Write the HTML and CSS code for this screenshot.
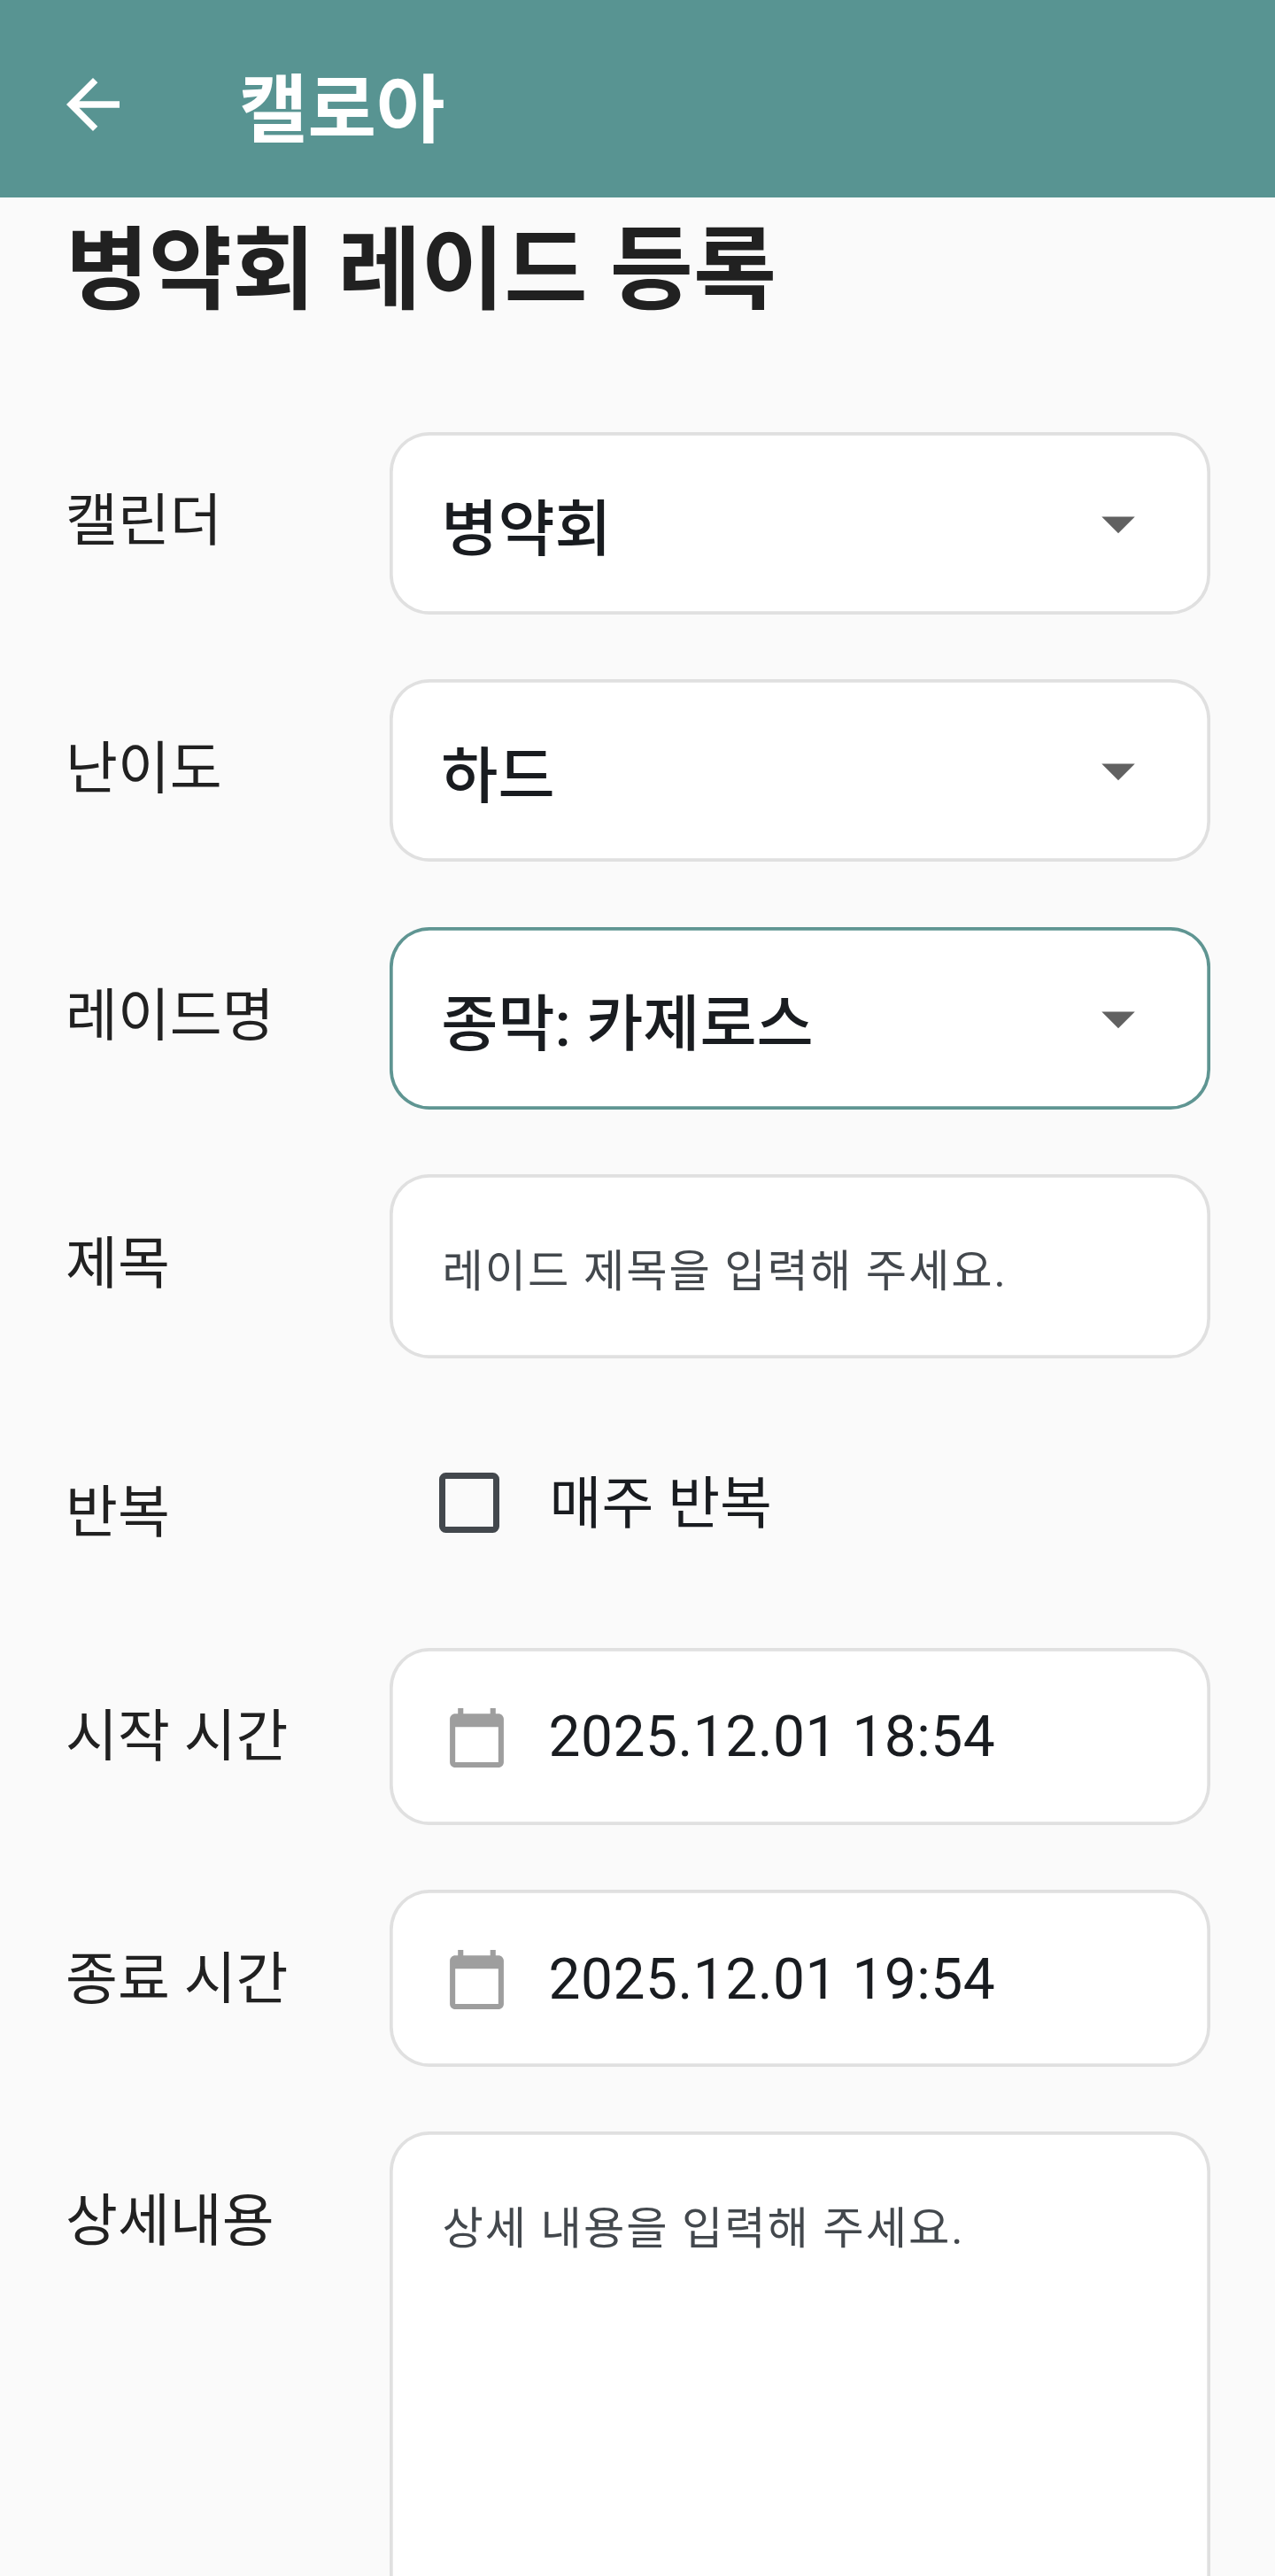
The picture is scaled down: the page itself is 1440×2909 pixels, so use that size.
FILE: index.html
```html
<!DOCTYPE html>
<html lang="ko">
<head>
<meta charset="utf-8">
<title>캘로아</title>
<link rel="stylesheet" href="styles.css">
</head>
<body>
<div class="screen">
  <header class="app-bar">
    <svg class="back" viewBox="0 0 24 24"><path d="M20 11H7.83l5.59-5.59L12 4l-8 8 8 8 1.41-1.41L7.83 13H20v-2z"/></svg>
    <div class="app-name">캘로아</div>
  </header>
  <main class="page">
    <h1 class="title">병약회 레이드 등록</h1>
    <div class="form">
      <div class="row">
        <div class="label">캘린더</div>
        <div class="field select"><span class="value">병약회</span><svg class="caret" viewBox="0 0 24 24"><path d="M7 10l5 5 5-5z"/></svg></div>
      </div>
      <div class="row">
        <div class="label">난이도</div>
        <div class="field select"><span class="value">하드</span><svg class="caret" viewBox="0 0 24 24"><path d="M7 10l5 5 5-5z"/></svg></div>
      </div>
      <div class="row">
        <div class="label">레이드명</div>
        <div class="field select active"><span class="value">종막: 카제로스</span><svg class="caret" viewBox="0 0 24 24"><path d="M7 10l5 5 5-5z"/></svg></div>
      </div>
      <div class="row">
        <div class="label">제목</div>
        <div class="field input"><span class="placeholder">레이드 제목을 입력해 주세요.</span></div>
      </div>
      <div class="row">
        <div class="label">반복</div>
        <div class="check"><span class="box"></span><span class="check-text">매주 반복</span></div>
      </div>
      <div class="row">
        <div class="label">시작 시간</div>
        <div class="field date"><svg class="calendar" viewBox="0 0 24 24"><path d="M20 3h-1V1h-2v2H7V1H5v2H4c-1.1 0-2 .9-2 2v16c0 1.1.9 2 2 2h16c1.1 0 2-.9 2-2V5c0-1.1-.9-2-2-2zm0 18H4V8h16v13z"/></svg><span class="time">2025.12.01 18:54</span></div>
      </div>
      <div class="row">
        <div class="label">종료 시간</div>
        <div class="field date"><svg class="calendar" viewBox="0 0 24 24"><path d="M20 3h-1V1h-2v2H7V1H5v2H4c-1.1 0-2 .9-2 2v16c0 1.1.9 2 2 2h16c1.1 0 2-.9 2-2V5c0-1.1-.9-2-2-2zm0 18H4V8h16v13z"/></svg><span class="time">2025.12.01 19:54</span></div>
      </div>
      <div class="row">
        <div class="label">상세내용</div>
        <div class="field textarea"><span class="placeholder">상세 내용을 입력해 주세요.</span></div>
      </div>
    </div>
  </main>
</div>
</body>
</html>
```
FILE: styles.css
```css
* {
  box-sizing: border-box;
}

body {
  margin: 0;
  background: #fafafa;
  color: #212121;
  font-family: Roboto, "Noto Sans CJK KR", sans-serif;
}

svg {
  display: block;
  flex: none;
}

.screen {
  width: 1440px;
  height: 2909px;
  overflow: hidden;
}

.app-bar {
  display: flex;
  align-items: flex-start;
  gap: 120px;
  height: 223px;
  padding: 73px 60px 0;
  background: #589492;
  color: #fff;
}

.back {
  width: 90px;
  height: 90px;
  fill: #fff;
}

.app-name {
  padding-top: 3px;
  font-size: 84.2px;
  font-weight: 700;
  line-height: 100px;
}

.page {
  padding: 22.5px 73.5px 0 74px;
}

.title {
  margin: 0 0 122.3px;
  font-size: 102.2px;
  font-weight: 700;
  line-height: 120px;
  white-space: nowrap;
}

.form {
  display: flex;
  flex-direction: column;
  gap: 73.5px;
}

.row {
  display: flex;
  align-items: flex-start;
}

.label {
  flex: none;
  width: 366px;
  padding-top: 61.5px;
  font-size: 64px;
  line-height: 80px;
  white-space: nowrap;
}

.field {
  flex: 1;
  display: flex;
  align-items: flex-start;
  height: 206px;
  padding-left: 59.5px;
  border-radius: 45px;
  background: #fff;
  box-shadow: inset 0 0 0 3.7px #e0e0e0;
  color: #191c20;
  white-space: nowrap;
}

.field.active {
  box-shadow: inset 0 0 0 3.7px #5f9592;
}

.select {
  justify-content: space-between;
  padding-right: 58.5px;
  padding-left: 58.3px;
}

.value {
  padding-top: 70px;
  font-size: 69.7px;
  font-weight: 500;
  line-height: 80px;
}

.caret {
  width: 90px;
  height: 90px;
  margin-top: 57.9px;
  fill: #616161;
}

.input {
  height: 208px;
}

.placeholder {
  padding-top: 79.5px;
  color: #43484d;
  font-size: 50.4px;
  line-height: 60px;
  letter-spacing: 1.95px;
}

.check {
  display: flex;
  align-items: flex-start;
  gap: 57px;
  height: 179.7px;
  padding-left: 56px;
  color: #191c20;
}

.box {
  width: 67.5px;
  height: 67.5px;
  margin-top: 55.5px;
  border: 7px solid #43484d;
  border-radius: 7.5px;
}

.check-text {
  padding-top: 51.3px;
  font-size: 64px;
  line-height: 80px;
}

.date {
  gap: 44.5px;
  height: 199.7px;
  padding-left: 62px;
}

.calendar {
  width: 73px;
  height: 73px;
  margin-top: 64.7px;
  fill: #9e9e9e;
}

.time {
  padding-top: 61.5px;
  font-size: 64px;
  line-height: 80px;
  letter-spacing: 0.5px;
}

.textarea {
  height: 620px;
}
```
